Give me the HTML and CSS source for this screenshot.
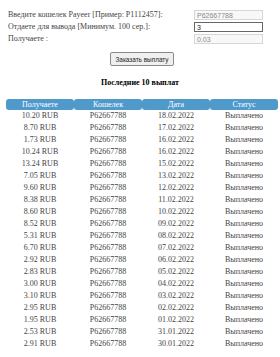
FILE: index.html
```html
<!DOCTYPE html>
<html>
<head>
<meta charset="utf-8">
<link rel="stylesheet" href="styles.css">
</head>
<body>
<div class="form">
  <div class="row"><span class="label">Введите кошелек Payeer [Пример: P1112457]:</span><input class="field ro" value="P62667788" readonly></div>
  <div class="row"><span class="label">Отдаете для вывода [Минимум. 100 сер.]:</span><input class="field active" value="3"></div>
  <div class="row"><span class="label">Получаете :</span><input class="field ro" value="0.03" readonly></div>
  <div class="btnrow"><button class="btn">Заказать выплату</button></div>
</div>
<h3 class="title">Последние 10 выплат</h3>
<table class="pay">
  <thead>
    <tr><th>Получаете</th><th>Кошелек</th><th>Дата</th><th>Статус</th></tr>
  </thead>
  <tbody>
    <tr><td>10.20 RUB</td><td>P62667788</td><td>18.02.2022</td><td>Выплачено</td></tr>
    <tr><td>8.70 RUB</td><td>P62667788</td><td>17.02.2022</td><td>Выплачено</td></tr>
    <tr><td>1.73 RUB</td><td>P62667788</td><td>16.02.2022</td><td>Выплачено</td></tr>
    <tr><td>10.24 RUB</td><td>P62667788</td><td>16.02.2022</td><td>Выплачено</td></tr>
    <tr><td>13.24 RUB</td><td>P62667788</td><td>15.02.2022</td><td>Выплачено</td></tr>
    <tr><td>7.05 RUB</td><td>P62667788</td><td>13.02.2022</td><td>Выплачено</td></tr>
    <tr><td>9.60 RUB</td><td>P62667788</td><td>12.02.2022</td><td>Выплачено</td></tr>
    <tr><td>8.38 RUB</td><td>P62667788</td><td>11.02.2022</td><td>Выплачено</td></tr>
    <tr><td>8.60 RUB</td><td>P62667788</td><td>10.02.2022</td><td>Выплачено</td></tr>
    <tr><td>8.52 RUB</td><td>P62667788</td><td>09.02.2022</td><td>Выплачено</td></tr>
    <tr><td>5.31 RUB</td><td>P62667788</td><td>08.02.2022</td><td>Выплачено</td></tr>
    <tr><td>6.70 RUB</td><td>P62667788</td><td>07.02.2022</td><td>Выплачено</td></tr>
    <tr><td>2.92 RUB</td><td>P62667788</td><td>06.02.2022</td><td>Выплачено</td></tr>
    <tr><td>2.83 RUB</td><td>P62667788</td><td>05.02.2022</td><td>Выплачено</td></tr>
    <tr><td>3.00 RUB</td><td>P62667788</td><td>04.02.2022</td><td>Выплачено</td></tr>
    <tr><td>3.10 RUB</td><td>P62667788</td><td>03.02.2022</td><td>Выплачено</td></tr>
    <tr><td>2.95 RUB</td><td>P62667788</td><td>02.02.2022</td><td>Выплачено</td></tr>
    <tr><td>1.95 RUB</td><td>P62667788</td><td>01.02.2022</td><td>Выплачено</td></tr>
    <tr><td>2.53 RUB</td><td>P62667788</td><td>31.01.2022</td><td>Выплачено</td></tr>
    <tr><td>2.91 RUB</td><td>P62667788</td><td>30.01.2022</td><td>Выплачено</td></tr>
  </tbody>
</table>
</body>
</html>
```
FILE: styles.css
```css
html, body {
  margin: 0;
  padding: 0;
  background: #fff;
}
body {
  font-family: "Liberation Serif", "Times New Roman", serif;
  font-size: 8px;
  color: #444;
}
.form {
  padding: 9px 0 0 8px;
}
.row {
  display: flex;
  align-items: center;
  height: 12px;
}
.label {
  width: 186px;
  line-height: 12px;
}
.field {
  box-sizing: border-box;
  width: 69px;
  height: 10px;
  margin: 0;
  padding: 0 2px;
  font-family: "Liberation Sans", Arial, sans-serif;
  font-size: 7px;
  line-height: 8px;
  color: #333;
  outline: none;
}
.ro {
  border: 1px solid #d6d6d6;
  background: #f8f8f8;
  color: #888;
}
.active {
  border: 1px solid #666;
  background: #fff;
  color: #222;
}
.btnrow {
  display: flex;
  justify-content: center;
  padding: 7px 0 0 0;
  margin-left: -8px;
  padding-left: 4px;
}
.btn {
  box-sizing: border-box;
  width: 64px;
  height: 14px;
  margin: 0;
  padding: 0;
  font-family: "Liberation Sans", Arial, sans-serif;
  font-size: 6.4px;
  color: #222;
  background: #efefef;
  border: 1px solid #8a8a8a;
  border-radius: 2px;
}
.title {
  margin: 12px 0 0 0;
  text-align: center;
  font-size: 8px;
  font-weight: bold;
  color: #000;
  line-height: 10px;
}
.pay {
  margin: 11px 0 0 6px;
  width: 272px;
  border-collapse: separate;
  border-spacing: 0;
  table-layout: fixed;
}
.pay th {
  background: #4f9acb;
  color: #fff;
  font-weight: normal;
  height: 11px;
  padding: 0;
  line-height: 11px;
  border-radius: 3px;
}
.pay td {
  text-align: center;
  height: 12px;
  padding: 0;
  line-height: 12px;
}
```
